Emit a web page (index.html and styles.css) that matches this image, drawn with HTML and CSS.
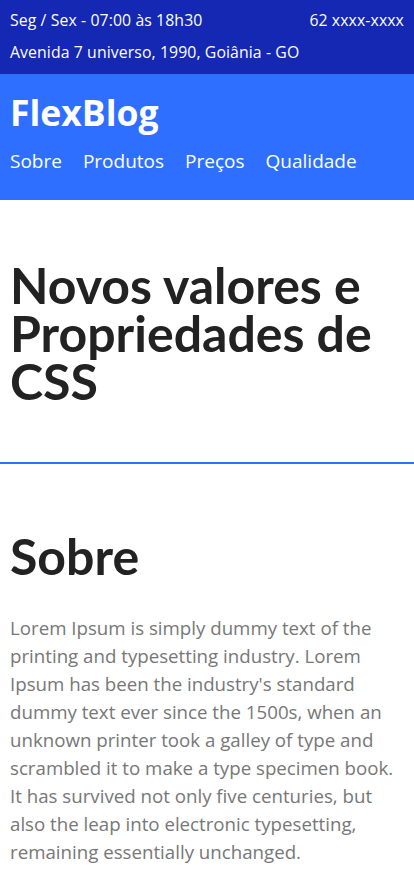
FILE: index.html
```html
<!DOCTYPE html>
<html lang="pt-BR">
<head>
<meta charset="utf-8">
<meta name="viewport" content="width=device-width, initial-scale=1">
<title>FlexBlog</title>
<link rel="stylesheet" href="styles.css">
</head>
<body>
<div class="topbar">
  <div class="topbar-row">
    <span>Seg / Sex - 07:00 às 18h30</span>
    <span>62 xxxx-xxxx</span>
  </div>
  <div class="topbar-row">
    <span>Avenida 7 universo, 1990, Goiânia - GO</span>
  </div>
</div>
<header class="header">
  <div class="logo">FlexBlog</div>
  <nav class="nav">
    <a href="#">Sobre</a>
    <a href="#">Produtos</a>
    <a href="#">Preços</a>
    <a href="#">Qualidade</a>
  </nav>
</header>
<main>
  <section class="hero">
    <h1>Novos valores e Propriedades de CSS</h1>
  </section>
  <section class="about">
    <h2>Sobre</h2>
    <p>Lorem Ipsum is simply dummy text of the printing and typesetting industry. Lorem Ipsum has been the industry's standard dummy text ever since the 1500s, when an unknown printer took a galley of type and scrambled it to make a type specimen book. It has survived not only five centuries, but also the leap into electronic typesetting, remaining essentially unchanged.</p>
  </section>
</main>
</body>
</html>
```
FILE: styles.css
```css
* { box-sizing: border-box; }
body {
  margin: 0;
  font-family: "Open Sans", "Noto Sans", sans-serif;
  color: #222;
  background: #fff;
}
.topbar {
  background: #1428b4;
  color: #fff;
  padding: 10px 10px 6px;
  font-size: 15.8px;
  letter-spacing: 0.1px;
  line-height: 20px;
  height: 74px;
}
.topbar-row {
  display: flex;
  justify-content: space-between;
  margin-bottom: 12px;
}
.header {
  background: #2f6fff;
  color: #fff;
  padding: 18px 10px 0;
  height: 126px;
}
.logo {
  font-size: 35.5px;
  font-weight: 700;
  line-height: 40px;
}
.nav {
  display: flex;
  gap: 21px;
  margin-top: 15px;
}
.nav a {
  color: #fff;
  text-decoration: none;
  font-size: 19px;
  line-height: 28px;
}
.hero {
  padding: 61px 10px 57px;
  border-bottom: 2px solid #2f6fff;
}
.hero h1,
.about h2 {
  font-family: Lato, "Open Sans", sans-serif;
  margin: 0;
  font-size: 50px;
  line-height: 48px;
  font-weight: 700;
}
.about {
  padding: 68px 10px 20px;
}
.about h2 {
  margin-bottom: 34px;
}
.about p {
  margin: 0;
  color: #777;
  font-size: 18.7px;
  line-height: 28px;
}
```
